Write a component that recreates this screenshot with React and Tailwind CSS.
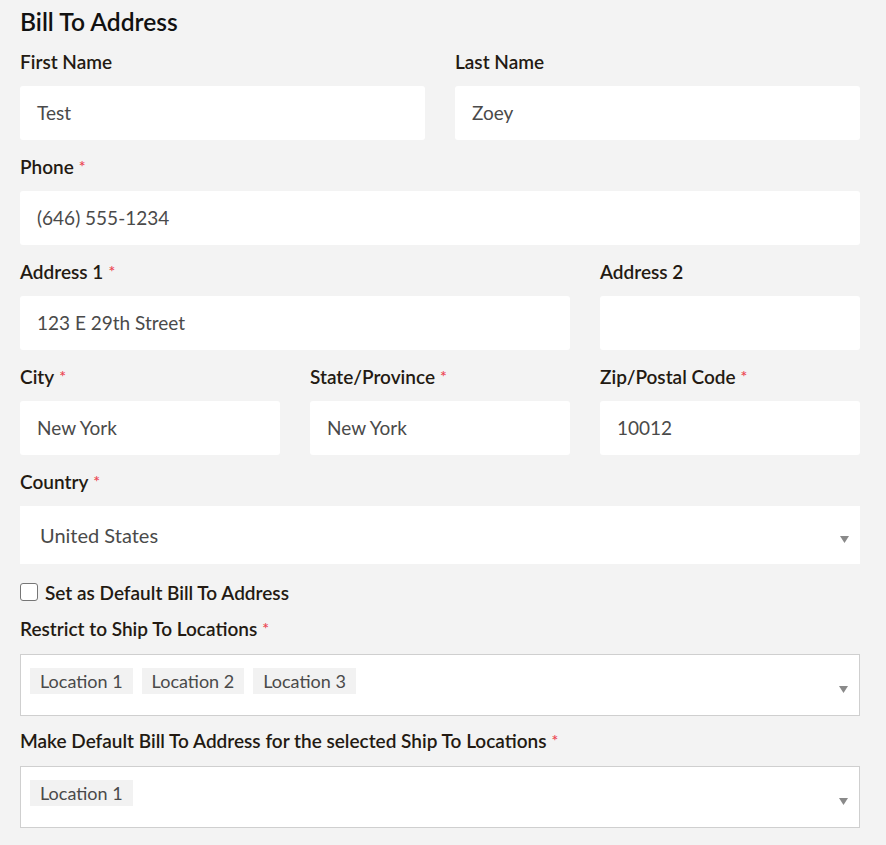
import React from 'react';

const Star = () => <span className="ml-[5px] align-top text-[16px] leading-[24px] text-[#ec4652]">*</span>;

const Label = ({ children, required, className = 'mb-[11px]' }) => (
  <div className={`${className} h-[26px] text-[19px] font-semibold leading-[26px] text-[#231a12]`}>
    {children}
    {required && <Star />}
  </div>
);

const Field = ({ label, required, value, className = '' }) => (
  <div className={className}>
    <Label required={required}>{label}</Label>
    <div className="flex h-[54px] items-center rounded-[3px] bg-white px-[17px] text-[19px] text-[#4a4a4a]">
      {value}
    </div>
  </div>
);

const Arrow = () => (
  <svg width="9" height="7" viewBox="0 0 9 7" className="absolute right-[11px] top-1/2 mt-[1px]">
    <path d="M0 0h9L4.5 7z" fill="#8a8a8a" />
  </svg>
);

const Tag = ({ children }) => (
  <span className="flex h-[26px] items-center bg-[#f2f2f2] px-[10px] text-[18px] text-[#4a4a4a]">{children}</span>
);

const MultiSelect = ({ tags }) => (
  <div className="relative flex h-[62px] items-center gap-[9px] border border-[#cfcfcf] bg-white pb-[8px] pl-[9px]">
    {tags.map((t) => (
      <Tag key={t}>{t}</Tag>
    ))}
    <Arrow />
  </div>
);

export default function App() {
  return (
    <div className="min-h-screen bg-[#f3f3f3] pt-[9px]" style={{ fontFamily: 'Lato, "Noto Sans", sans-serif' }}>
      <div className="ml-[20px] w-[840px]">
        <h2 className="mb-[13px] h-[27px] text-[24.6px] font-semibold leading-[26px] text-[#111]">Bill To Address</h2>

        <div className="grid grid-cols-2 gap-x-[30px]">
          <Field label="First Name" value="Test" />
          <Field label="Last Name" value="Zoey" />
        </div>

        <Field className="mt-[14px]" label="Phone" required value="(646) 555-1234" />

        <div className="mt-[14px] grid grid-cols-3 gap-x-[30px] gap-y-[14px]">
          <Field className="col-span-2" label="Address 1" required value="123 E 29th Street" />
          <Field label="Address 2" value="" />
          <Field label="City" required value="New York" />
          <Field label="State/Province" required value="New York" />
          <Field label="Zip/Postal Code" required value="10012" />
        </div>

        <div className="mt-[14px]">
          <Label required>Country</Label>
          <div className="relative flex h-[58px] items-center bg-white pl-[20px] text-[20px] text-[#4a4a4a]">
            United States
            <Arrow />
          </div>
        </div>

        <label className="mt-[16px] flex h-[26px] items-center gap-[7px] text-[19px] font-semibold text-[#231a12]">
          <span className="mb-[3px] h-[18px] w-[18px] rounded-[3px] border border-[#767676] bg-white" />
          Set as Default Bill To Address
        </label>

        <div className="mt-[10px]">
          <Label required className="mb-[12px]">Restrict to Ship To Locations</Label>
          <MultiSelect tags={['Location 1', 'Location 2', 'Location 3']} />
        </div>

        <div className="mt-[12px]">
          <Label required className="mb-[12px]">Make Default Bill To Address for the selected Ship To Locations</Label>
          <MultiSelect tags={['Location 1']} />
        </div>
      </div>
    </div>
  );
}
